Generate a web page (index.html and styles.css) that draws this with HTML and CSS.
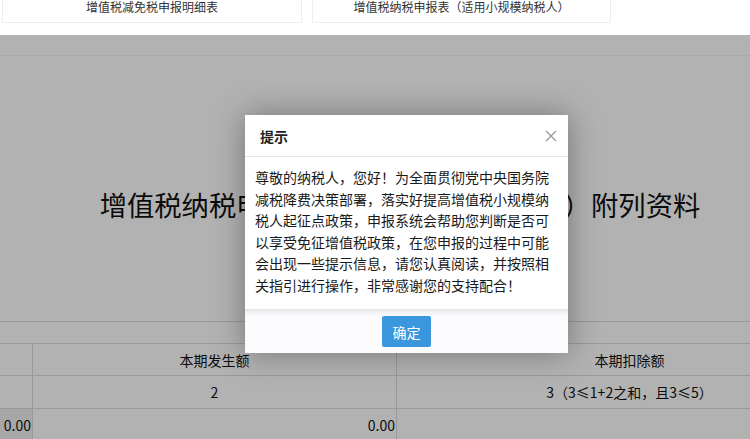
FILE: index.html
```html
<!DOCTYPE html>
<html lang="zh-CN">
<head>
  <meta charset="UTF-8" />
  <title>增值税纳税申报表附列资料</title>
  <link rel="stylesheet" href="styles.css">
</head>
<body>
  <!-- 报表页签 -->
  <div class="tabs">
    <div class="tab">增值税减免税申报明细表</div>
    <div class="tab">增值税纳税申报表（适用小规模纳税人）</div>
  </div>

  <div class="main">
    <div class="toolbar"></div>
    <h1 class="title">增值税纳税申报表（小规模纳税人适用）附列资料</h1>

    <table class="grid">
      <colgroup>
        <col class="c0"><col class="c1"><col class="c2">
      </colgroup>
      <tr class="row-top"><td colspan="3"></td></tr>
      <tr class="row-head">
        <td></td>
        <td>本期发生额</td>
        <td>本期扣除额</td>
      </tr>
      <tr class="row-no">
        <td></td>
        <td>2</td>
        <td>3（3≤1+2之和，且3≤5）</td>
      </tr>
      <tr class="row-val">
        <td class="num dim">0.00</td>
        <td class="num">0.00</td>
        <td></td>
      </tr>
    </table>

    <!-- 遮罩和提示框 -->
    <div class="mask"></div>
    <div class="dialog">
      <div class="dialog-head">
        <span class="dialog-title">提示</span>
        <span class="dialog-close">
          <svg width="12" height="12" viewBox="0 0 12 12">
            <path d="M1 1 L11 11 M11 1 L1 11" stroke="#9a9a9a" stroke-width="1.4" fill="none"/>
          </svg>
        </span>
      </div>
      <div class="dialog-body">尊敬的纳税人，您好！为全面贯彻党中央国务院减税降费决策部署，落实好提高增值税小规模纳税人起征点政策，申报系统会帮助您判断是否可以享受免征增值税政策，在您申报的过程中可能会出现一些提示信息，请您认真阅读，并按照相关指引进行操作，非常感谢您的支持配合！</div>
      <div class="dialog-foot">
        <button class="btn-ok">确定</button>
      </div>
    </div>
  </div>
</body>
</html>
```

FILE: styles.css
```css
body {
  margin: 0;
  width: 750px;
  height: 439px;
  overflow: hidden;
  background: #fff;
  font-family: "Noto Sans CJK SC", "Liberation Sans", sans-serif;
  color: #333;
}

.tabs {
  height: 35px;
  display: flex;
  gap: 10px;
  padding-left: 2px;
}

.tab {
  height: 23px;
  box-sizing: border-box;
  border: 1px solid #eee;
  border-top: none;
  font-size: 12px;
  line-height: 14px;
  text-align: center;
}

.tab:first-child {
  width: 300px;
}

.tab:last-child {
  width: 299px;
}

.main {
  position: relative;
  height: 404px;
  overflow: hidden;
}

.toolbar {
  height: 20px;
  border-bottom: 1px solid #f4f4f4;
}

.title {
  margin: 130px 0 0;
  padding-left: 50px;
  font-size: 27.3px;
  font-weight: normal;
  line-height: 36px;
  text-align: center;
  color: #111;
}

.grid {
  margin: 99px 0 0 -60px;
  border-collapse: collapse;
  table-layout: fixed;
  width: 922px;
  font-size: 14px;
  color: #111;
}

.grid .c0 { width: 92px; }
.grid .c1 { width: 364px; }
.grid .c2 { width: 466px; }

.grid td {
  border: 1px solid #dcdcdc;
  text-align: center;
  padding: 0;
}

.row-top td {
  height: 21px;
  border-left: none;
  border-right: none;
}

.row-head td {
  height: 31px;
}

.row-no td {
  height: 32px;
}

.row-val td {
  height: 32px;
}

.grid td.num {
  text-align: right;
  padding-right: 1px;
}

.grid td.dim {
  background: #f0f0f0;
}

.mask {
  position: absolute;
  inset: 0;
  background: rgba(0, 0, 0, 0.3);
}

.dialog {
  position: absolute;
  left: 245px;
  top: 80px;
  width: 323px;
  background: #fff;
  box-shadow: 0 0 30px rgba(0, 0, 0, 0.35);
}

.dialog-head {
  height: 41px;
  border-bottom: 1px solid #e5e5e5;
  display: flex;
  align-items: center;
  justify-content: space-between;
  padding: 0 11px 0 15px;
}

.dialog-title {
  font-size: 14px;
  font-weight: 600;
  color: #222;
}

.dialog-close {
  display: flex;
}

.dialog-body {
  padding: 10px 10px 13px;
  font-size: 14px;
  line-height: 21.5px;
  color: #1a1a1a;
}

.dialog-foot {
  height: 44px;
  box-sizing: border-box;
  padding-top: 7px;
  text-align: center;
  background: #fcfbfd;
  box-shadow: inset 0 6px 6px -4px rgba(0, 0, 0, 0.12);
}

.btn-ok {
  width: 49px;
  height: 31px;
  border: none;
  border-radius: 2px;
  background: #3a97de;
  color: #fff;
  font-family: inherit;
  font-size: 14px;
  padding: 0;
}
```
